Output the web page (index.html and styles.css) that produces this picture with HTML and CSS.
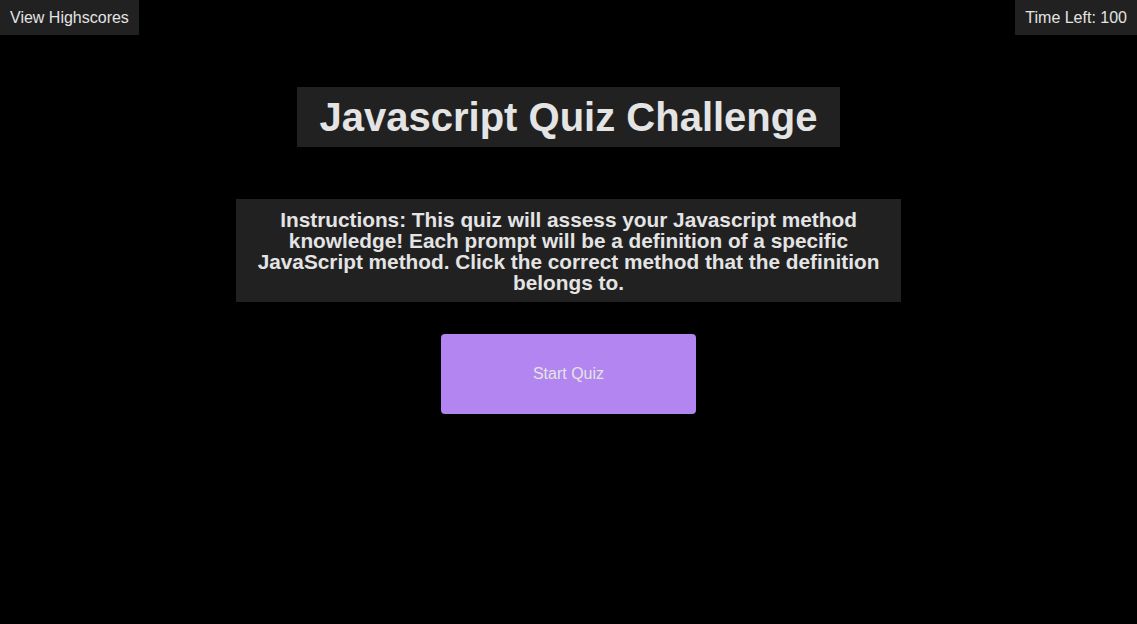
FILE: index.html
```html
<!DOCTYPE html>
<html>
<head>
<meta charset="utf-8">
<link rel="stylesheet" href="styles.css">
</head>
<body>
<header class="topbar">
  <a class="tag">View Highscores</a>
  <div class="tag">Time Left: 100</div>
</header>
<main class="content">
  <h1 class="title">Javascript Quiz Challenge</h1>
  <p class="instructions">Instructions: This quiz will assess your Javascript method knowledge! Each prompt will be a definition of a specific JavaScript method. Click the correct method that the definition belongs to.</p>
  <button class="start">Start Quiz</button>
</main>
</body>
</html>
```
FILE: styles.css
```css
html, body {
  margin: 0;
  padding: 0;
  background: #000;
  color: #e4e4e4;
  font-family: "Liberation Sans", Arial, sans-serif;
}
.topbar {
  display: flex;
  justify-content: space-between;
  align-items: flex-start;
}
.tag {
  display: block;
  background: #212121;
  color: #e4e4e4;
  font-size: 16px;
  line-height: 35px;
  height: 35px;
  padding: 0 10px;
}
.content {
  display: flex;
  flex-direction: column;
  align-items: center;
}
.title {
  margin: 52px 0 0;
  background: #212121;
  font-size: 40px;
  font-weight: bold;
  line-height: 46px;
  padding: 7px 23px;
}
.instructions {
  margin: 52px 0 0;
  width: 665px;
  box-sizing: border-box;
  background: #212121;
  font-size: 20.8px;
  font-weight: bold;
  line-height: 21px;
  padding: 9.5px 10px;
  text-align: center;
}
.start {
  margin-top: 32px;
  width: 255px;
  height: 80px;
  border: none;
  border-radius: 4px;
  background: #b385f0;
  color: #e4e4e4;
  font-family: "Liberation Sans", Arial, sans-serif;
  font-size: 16px;
}
```
